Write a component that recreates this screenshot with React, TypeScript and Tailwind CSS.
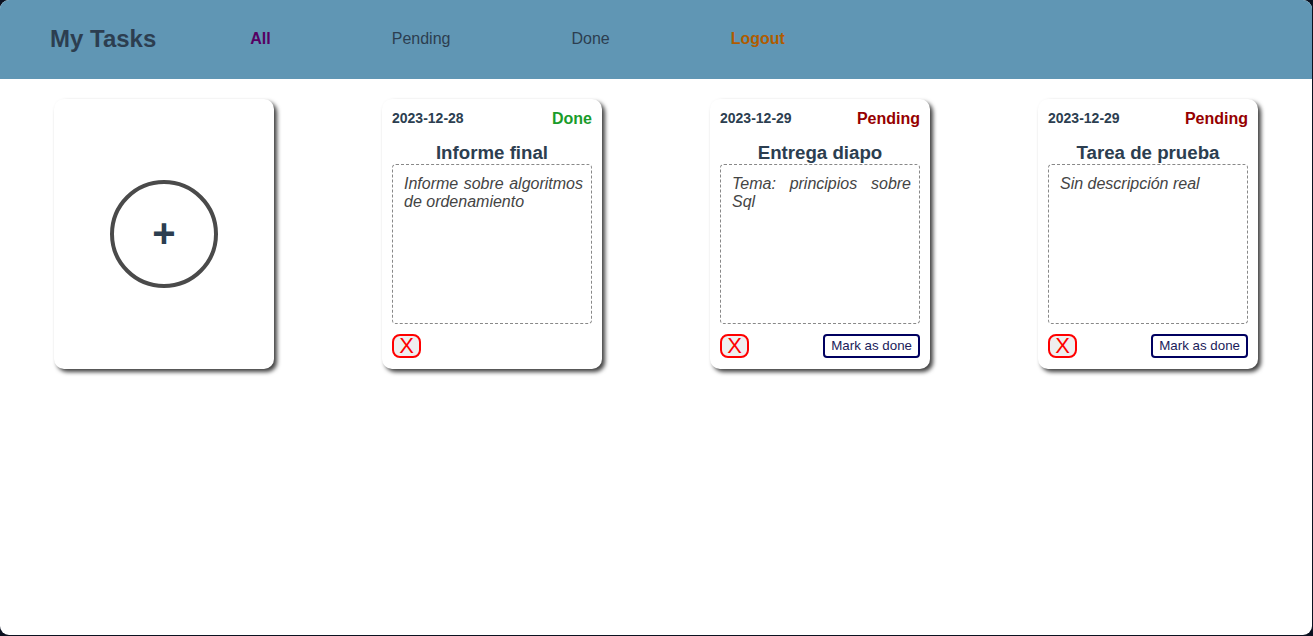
import React from 'react';

interface Task {
  date: string;
  status: 'Done' | 'Pending';
  title: string;
  description: string;
}

const tasks: Task[] = [
  { date: '2023-12-28', status: 'Done', title: 'Informe final', description: 'Informe sobre algoritmos de ordenamiento' },
  { date: '2023-12-29', status: 'Pending', title: 'Entrega diapo', description: 'Tema: principios sobre Sql' },
  { date: '2023-12-29', status: 'Pending', title: 'Tarea de prueba', description: 'Sin descripción real' },
];

const cardClass =
  'w-[220px] h-[270px] bg-white rounded-[10px] shadow-[3px_3px_4px_rgba(0,0,0,0.75)]';

const TaskCard: React.FC<{ task: Task }> = ({ task }) => (
  <div className={`${cardClass} flex flex-col px-[10px] pt-[10px]`}>
    <div className="flex items-center justify-between h-[19px]">
      <span className="text-[14px] font-bold text-[#2c3e50]">{task.date}</span>
      <span
        className={`text-[16px] font-bold ${task.status === 'Done' ? 'text-[#1a9c2a]' : 'text-[#960000]'}`}
      >
        {task.status}
      </span>
    </div>
    <h3 className="mt-[14px] text-center text-[18.7px] font-bold leading-[22px] text-[#2c3e50]">{task.title}</h3>
    <p className="h-[160px] border border-dashed border-[#888] rounded-[4px] pl-[11px] pr-[8px] pt-[10px] text-[16px] italic leading-[18px] text-[#444] text-justify">
      {task.description}
    </p>
    <div className="mt-[10px] flex items-center justify-between">
      <button className="w-[29px] h-[24px] flex items-center justify-center border-2 border-[#ff0000] rounded-[8px] bg-[#efefef] text-[22px] leading-none text-[#ff0000]">
        X
      </button>
      {task.status === 'Pending' && (
        <button className="h-[24px] px-[6px] border-2 border-[#000060] rounded-[4px] bg-white text-[13.33px] text-[#1b1b5a]">
          Mark as done
        </button>
      )}
    </div>
  </div>
);

export default function App() {
  return (
    <div className="w-[1313px] h-[636px] bg-[#0b1120] pr-[1px] pb-[1px]" style={{ fontFamily: '"Liberation Sans", Arial, sans-serif' }}>
      <div className="w-full h-full bg-white rounded-[9px] overflow-hidden">
        <header className="h-[79px] bg-[#6096b4] flex items-center pl-[50px]">
          <h1 className="text-[24px] font-bold text-[#2c3e50] -mt-[1px]">My Tasks</h1>
          <nav className="ml-[94px] flex items-center gap-[121px] text-[16px] -mt-[2px]">
            <span className="font-bold text-[#560063]">All</span>
            <span className="text-[#2c3e50]">Pending</span>
            <span className="text-[#2c3e50]">Done</span>
            <span className="font-bold text-[#b05c00]">Logout</span>
          </nav>
        </header>
        <main className="pt-[20px] flex justify-around">
          <div className={`${cardClass} flex items-center justify-center`}>
            <div className="w-[108px] h-[108px] rounded-full border-4 border-[#4a4a4a] flex items-center justify-center text-[40px] font-bold leading-none text-[#2c3e50] pb-[2px]">
              +
            </div>
          </div>
          {tasks.map((task, i) => (
            <TaskCard key={i} task={task} />
          ))}
        </main>
      </div>
    </div>
  );
}
